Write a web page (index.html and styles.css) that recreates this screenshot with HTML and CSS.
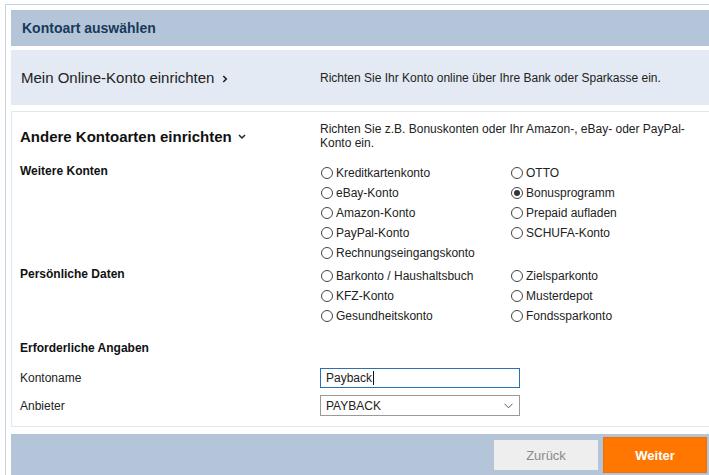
FILE: index.html
```html
<!DOCTYPE html>
<html>
<head>
  <meta charset="utf-8">
  <title>Kontoart auswählen</title>
  <link rel="stylesheet" href="styles.css">
</head>
<body>
  <div class="frame">
    <div class="titlebar">Kontoart auswählen</div>

    <div class="online">
      <div class="online-link">Mein Online-Konto einrichten
        <svg class="chev-right" width="6" height="8" viewBox="0 0 6 8"><path d="M1.3 1 L4.3 4 L1.3 7" fill="none" stroke="#222" stroke-width="1.6"/></svg>
      </div>
      <div class="online-desc">Richten Sie Ihr Konto online über Ihre Bank oder Sparkasse ein.</div>
    </div>

    <div class="other">
      <div class="row head">
        <div class="other-title">Andere Kontoarten einrichten
          <svg class="chev-down" width="8" height="6" viewBox="0 0 8 6"><path d="M1 1 L4 4 L7 1" fill="none" stroke="#222" stroke-width="1.5"/></svg>
        </div>
        <div class="other-desc">Richten Sie z.B. Bonuskonten oder Ihr Amazon-, eBay- oder PayPal-Konto ein.</div>
      </div>

      <div class="row section">
        <div class="sec-label">Weitere Konten</div>
        <div class="radios">
          <label class="radio"><i></i>Kreditkartenkonto</label>
          <label class="radio"><i></i>OTTO</label>
          <label class="radio"><i></i>eBay-Konto</label>
          <label class="radio checked"><i></i>Bonusprogramm</label>
          <label class="radio"><i></i>Amazon-Konto</label>
          <label class="radio"><i></i>Prepaid aufladen</label>
          <label class="radio"><i></i>PayPal-Konto</label>
          <label class="radio"><i></i>SCHUFA-Konto</label>
          <label class="radio wide"><i></i>Rechnungseingangskonto</label>
        </div>
      </div>

      <div class="row section second">
        <div class="sec-label">Persönliche Daten</div>
        <div class="radios">
          <label class="radio"><i></i>Barkonto / Haushaltsbuch</label>
          <label class="radio"><i></i>Zielsparkonto</label>
          <label class="radio"><i></i>KFZ-Konto</label>
          <label class="radio"><i></i>Musterdepot</label>
          <label class="radio"><i></i>Gesundheitskonto</label>
          <label class="radio"><i></i>Fondssparkonto</label>
        </div>
      </div>

      <div class="sec-label required">Erforderliche Angaben</div>

      <div class="row field name-field">
        <div class="field-label">Kontoname</div>
        <div class="textbox">Payback<span class="caret"></span></div>
      </div>
      <div class="row field select-field">
        <div class="field-label">Anbieter</div>
        <div class="selectbox">PAYBACK
          <svg class="sel-arrow" width="9" height="6" viewBox="0 0 9 6"><path d="M0.5 0.8 L4.5 4.8 L8.5 0.8" fill="none" stroke="#555" stroke-width="1"/></svg>
        </div>
      </div>
    </div>

    <div class="footer">
      <button class="btn back">Zurück</button>
      <button class="btn next">Weiter</button>
    </div>
  </div>
</body>
</html>
```

FILE: styles.css
```css
html, body {
  margin: 0;
  padding: 0;
  overflow: hidden;
  background: #ffffff;
}
body {
  font-family: "Liberation Sans", Arial, sans-serif;
  font-size: 12px;
  color: #222222;
}
.frame {
  box-sizing: border-box;
  width: 714px;
  margin: 4px 0 0 5px;
  border: 1px solid #c9d3e0;
  padding: 5px;
}
.titlebar {
  height: 36px;
  line-height: 36px;
  background: #b4c5d9;
  color: #173a5a;
  font-weight: bold;
  font-size: 14px;
  padding-left: 11px;
}
.online {
  margin-top: 4px;
  height: 55px;
  background: #e3eaf3;
  display: grid;
  grid-template-columns: 299px 1fr;
  align-items: center;
  padding-left: 10px;
}
.online-link {
  font-size: 15px;
  color: #222;
}
.chev-right {
  margin-left: 3px;
  vertical-align: 0px;
}
.online-desc {
  font-size: 12px;
  padding-top: 1px;
}
.other {
  margin-top: 6px;
  border: 1px solid #e1e7ee;
  padding: 10px 0 10px 8px;
}
.row {
  display: grid;
  grid-template-columns: 300px 1fr;
}
.head {
  align-items: start;
}
.other-title {
  font-size: 15px;
  font-weight: bold;
  line-height: 30px;
  color: #111;
}
.chev-down {
  margin-left: 2px;
  vertical-align: 2px;
}
.other-desc {
  line-height: 14px;
  padding-right: 20px;
}
.section {
  margin-top: 11px;
}
.section.second {
  margin-top: 3px;
}
.sec-label {
  font-weight: bold;
  line-height: 16px;
  color: #111;
}
.sec-label.required {
  margin-top: 14px;
}
.radios {
  display: grid;
  grid-template-columns: 190px 190px;
  grid-auto-rows: 20px;
}
.radio {
  display: flex;
  align-items: center;
  gap: 3px;
  padding-left: 1px;
  white-space: nowrap;
}
.radio.wide {
  grid-column: span 2;
}
.radio i {
  box-sizing: border-box;
  width: 12px;
  height: 12px;
  border: 1px solid #444;
  border-radius: 50%;
  display: flex;
  align-items: center;
  justify-content: center;
}
.radio.checked i::after {
  content: "";
  width: 6px;
  height: 6px;
  border-radius: 50%;
  background: #333;
}
.field {
  align-items: center;
}
.name-field {
  margin-top: 12px;
}
.select-field {
  margin-top: 7px;
}
.textbox, .selectbox {
  box-sizing: border-box;
  width: 200px;
  padding-left: 5px;
  position: relative;
  display: flex;
  align-items: center;
}
.textbox {
  height: 20px;
  border: 1px solid #2a6fb8;
}
.caret {
  width: 1px;
  height: 14px;
  background: #111;
  margin-left: 1px;
}
.selectbox {
  height: 21px;
  border: 1px solid #9a9a9a;
}
.sel-arrow {
  position: absolute;
  right: 6px;
  top: 7px;
}
.footer {
  margin-top: 7px;
  height: 50px;
  background: #b4c5d9;
  display: flex;
  justify-content: flex-end;
  align-items: flex-start;
  padding-right: 6px;
  gap: 5px;
}
.btn {
  font-family: "Liberation Sans", Arial, sans-serif;
  font-size: 13px;
  border: none;
  width: 104px;
  cursor: pointer;
}
.back {
  margin-top: 6px;
  height: 30px;
  background: #eeeeee;
  color: #8a8a8a;
}
.next {
  margin-top: 3px;
  height: 36px;
  background: #ff7600;
  border: 1px solid #f07000;
  color: #ffffff;
  font-weight: bold;
}
```
